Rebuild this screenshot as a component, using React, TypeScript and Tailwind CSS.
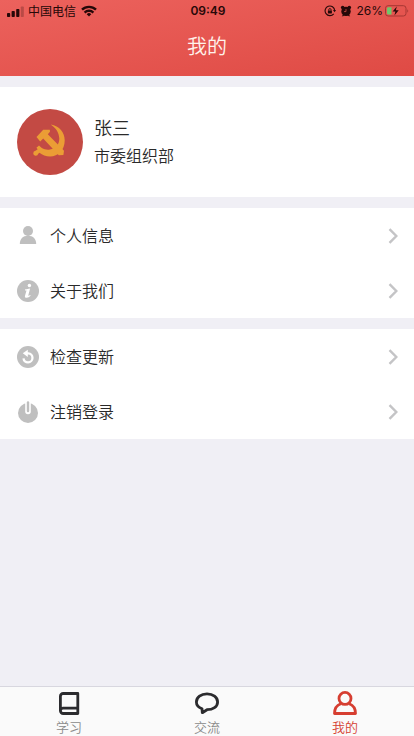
import clsx from "clsx";
import { FC, ReactNode } from "react";

const StatusBar: FC = () => (
  <div className="flex h-[22px] items-center justify-between text-xs leading-5 text-[#260808]">
    <div className="flex flex-1 items-center pl-[7px]">
      <svg viewBox="0 0 17 11" className="mr-1 h-[11px] w-[17px]" fill="currentColor">
        <rect x="0" y="7" width="3.2" height="4" rx="0.8" />
        <rect x="4.6" y="5" width="3.2" height="6" rx="0.8" />
        <rect x="9.2" y="3" width="3.2" height="8" rx="0.8" />
        <rect x="13.8" y="0.5" width="3" height="10.5" rx="0.8" opacity="0.25" />
      </svg>
      <span>中国电信</span>
      <svg viewBox="0 0 16 12" className="ml-[5px] h-3 w-4" fill="none" stroke="currentColor" strokeWidth="2.4">
        <path d="M1 4.7a10 10 0 0 1 14 0" />
        <path d="M3.6 7.6a6.3 6.3 0 0 1 8.8 0" />
        <path d="M8 11.6 5.7 9.2a3.3 3.3 0 0 1 4.6 0Z" fill="currentColor" stroke="none" />
      </svg>
    </div>
    <span className="font-['Inter','Liberation_Sans',sans-serif] font-semibold">09:49</span>
    <div className="flex flex-1 items-center justify-end pr-[5px]">
      <svg viewBox="0 0 12 12" className="mr-1 h-3 w-3" fill="none" stroke="currentColor">
        <path d="M9.7 8.8a4.8 4.8 0 1 1 1-3.3" strokeWidth="1.1" />
        <path d="M9 5h3l-1.4 2.2Z" fill="currentColor" stroke="none" />
        <rect x="3.9" y="5.4" width="4" height="3" rx="0.4" fill="currentColor" stroke="none" />
        <path d="M4.7 5.6v-.8a1.2 1.2 0 0 1 2.4 0v.8" strokeWidth="0.9" />
      </svg>
      <svg viewBox="0 0 12 12" className="mr-1 h-3 w-3" fill="currentColor">
        <circle cx="6" cy="6.4" r="4.7" />
        <circle cx="2.7" cy="2.6" r="1.8" />
        <circle cx="9.3" cy="2.6" r="1.8" />
        <path d="m1.8 11.2 1.6-2h5.2l1.6 2H8.8l-1-1H4.2l-1 1Z" />
        <path d="M6 4v2.6H4" fill="none" stroke="#e4544f" strokeWidth="0.7" />
      </svg>
      <span className="font-['Inter','Liberation_Sans',sans-serif]">26%</span>
      <svg viewBox="0 0 24 12" className="ml-0.5 h-3 w-6" fill="none">
        <rect x="0.5" y="0.7" width="20.5" height="10.3" rx="2.6" stroke="#a53733" />
        <path d="M3.4 2.2H6.5v7.4H3.4A1.4 1.4 0 0 1 2 8.200V3.600a1.400 1.400 0 0 1 1.400-1.400Z" fill="#6fc76b" />
        <path d="M22.3 4.2c1.2.5 1.2 2.9 0 3.4Z" fill="#a53733" />
        <path d="M11.8 1.4 7.6 6.5h2.8l-1 3.9 4.3-5.1h-2.9Z" fill="currentColor" />
      </svg>
    </div>
  </div>
);

const Emblem: FC = () => (
  <svg viewBox="0 0 66 66" className="h-[66px] w-[66px] shrink-0" role="img" aria-label="头像">
    <circle cx="33" cy="33" r="33" fill="#c34a44" />
    <g fill="#eb9d35">
      <path d="M33.7 15.6C42.5 17 47.7 23.5 47.7 31.5c0 9.3-6.5 16-14.7 16-4 0-7.700-1.300-10.500-3.700l-1.300 1a2.500 2.500 0 1 1-2.700-3l2.200-1.600-1.300-1.500 2.600-2.200 2.800 2.600c2.600 1.500 5.300 2 8.200 1.500 5.500-1 9.300-5 9.300-10.800 0-5.500-3.200-10.700-8.600-14.200Z" />
      <path d="m19.500 28 6.700-7.200h6.600l.2 2-2.200 2.400L47 41.700l-.6 4.300-4.600.3-15.600-16.700-3 2.800Z" />
    </g>
  </svg>
);

const ProfileIcon: FC = () => (
  <svg viewBox="0 0 22 22" className="h-[22px] w-[22px]" fill="#bfbfbf">
    <circle cx="11" cy="6" r="5" />
    <path d="M2.8 19c0-5 2.9-8.3 8.2-8.3s8.2 3.300 8.200 8.300Z" />
  </svg>
);

const InfoIcon: FC = () => (
  <svg viewBox="0 0 22 22" className="h-[22px] w-[22px]">
    <circle cx="11" cy="11" r="11" fill="#bfbfbf" />
    <circle cx="12.4" cy="5.5" r="1.7" fill="#fff" />
    <path d="M8.2 9.3c1.7 0 3-.3 4.9-.8l-1.9 7.3c.8 0 1.3-.2 2-.8l.4.8c-1.2 1.3-2.5 2-4 2-1.4 0-2-.8-1.6-2.1l1.5-5.300H8Z" fill="#fff" />
  </svg>
);

const UpdateIcon: FC = () => (
  <svg viewBox="0 0 22 22" className="h-[22px] w-[22px]">
    <circle cx="11" cy="11" r="11" fill="#bfbfbf" />
    <path d="M9.5 7.400h1.800a4.500 4.500 0 1 1-4.800 4.900" fill="none" stroke="#fff" strokeWidth="2.3" />
    <path d="m5.8 7.3 5-3.6v7.2Z" fill="#fff" />
  </svg>
);

const LogoutIcon: FC = () => (
  <svg viewBox="0 0 22 22" className="h-[22px] w-[22px]">
    <circle cx="11" cy="12" r="10" fill="#bfbfbf" />
    <path d="M11 0v10.5" stroke="#fff" strokeWidth="5.6" strokeLinecap="round" />
    <path d="M11 1.5v8.5" stroke="#bfbfbf" strokeWidth="2.4" strokeLinecap="round" />
  </svg>
);

const StudyIcon: FC = () => (
  <svg viewBox="0 0 24 24" className="h-6 w-6" fill="none" stroke="#2b2b2e" strokeWidth="2.8" strokeLinejoin="round">
    <path d="M20.8 17.2V2.500H6.200a2.800 2.800 0 0 0-2.800 2.800v14.400a2.800 2.800 0 0 0 2.800 2.800h14.600v-5.300H6.200a2.800 2.800 0 0 0-2.800 2.600" />
  </svg>
);

const ChatIcon: FC = () => (
  <svg viewBox="0 0 24 24" className="h-6 w-6" fill="none" stroke="#2b2b2e" strokeWidth="2.8" strokeLinejoin="round">
    <path d="M12 2.800C6 2.800 1.400 6.200 1.400 10.900c0 2.900 2 5.300 5.600 6.800l.3 4 4.700-3c6 0 10.600-3.100 10.600-7.800S18 2.800 12 2.800Z" />
  </svg>
);

const MineIcon: FC = () => (
  <svg viewBox="0 0 24 24" className="h-6 w-6" fill="none" stroke="#d63e31" strokeWidth="2.8" strokeLinejoin="round">
    <circle cx="12" cy="7.4" r="6" />
    <path d="M7.8 12.800c-4 1.500-6.300 4.800-6.300 9.700h21c0-4.900-2.300-8.200-6.300-9.700" />
  </svg>
);

type MenuItem = { label: string; icon: ReactNode };

const menuGroups: MenuItem[][] = [
  [
    { label: "个人信息", icon: <ProfileIcon /> },
    { label: "关于我们", icon: <InfoIcon /> },
  ],
  [
    { label: "检查更新", icon: <UpdateIcon /> },
    { label: "注销登录", icon: <LogoutIcon /> },
  ],
];

const tabs = [
  { label: "学习", href: "#study", icon: <StudyIcon />, active: false },
  { label: "交流", href: "#chat", icon: <ChatIcon />, active: false },
  { label: "我的", href: "#mine", icon: <MineIcon />, active: true },
];

const MenuRow: FC<MenuItem> = ({ label, icon }) => (
  <li>
    <button type="button" className="flex h-[55px] w-full items-center pr-4 pl-[17px] text-left">
      {icon}
      <span className="ml-[11px] flex-1 pb-0.5 text-base font-[350] text-[#2a2a2a]">{label}</span>
      <svg viewBox="0 0 10 16" className="h-4 w-2.5" fill="none" stroke="#c4c4c6" strokeWidth="2.4">
        <path d="m1.5 1.2 6.8 6.8-6.8 6.8" />
      </svg>
    </button>
  </li>
);

export default function App() {
  return (
    <div className="flex min-h-screen flex-col bg-[#f0eff5] font-['Noto_Sans_CJK_SC',sans-serif]">
      <header className="h-[76px] bg-linear-170 from-[#ec625d] to-[#df4a44]">
        <StatusBar />
        <h1 className="pt-2.5 text-center text-xl leading-7 font-[350] text-[#fff3ec]">我的</h1>
      </header>

      <main className="flex flex-1 flex-col gap-[11px] pt-[11px]">
        <section className="flex h-[110px] items-center bg-white px-[17px]">
          <Emblem />
          <div className="ml-[11px] pb-0.5 font-[350] text-[#2a2a2a]">
            <h2 className="text-lg leading-7">张三</h2>
            <p className="text-base leading-7">市委组织部</p>
          </div>
        </section>

        {menuGroups.map((items) => (
          <ul key={items[0].label} className="bg-white">
            {items.map((item) => (
              <MenuRow key={item.label} {...item} />
            ))}
          </ul>
        ))}
      </main>

      <nav className="grid h-[50px] grid-cols-3 border-t border-[#d8d7df] bg-[#fafafa]">
        {tabs.map(({ label, href, icon, active }) => (
          <a
            key={label}
            href={href}
            aria-current={active ? "page" : undefined}
            className={clsx(
              "flex flex-col items-center pt-1 text-[13px] leading-6 font-[350]",
              active ? "text-[#d63e31]" : "text-[#8a8a8a]",
            )}
          >
            {icon}
            {label}
          </a>
        ))}
      </nav>
    </div>
  );
}
